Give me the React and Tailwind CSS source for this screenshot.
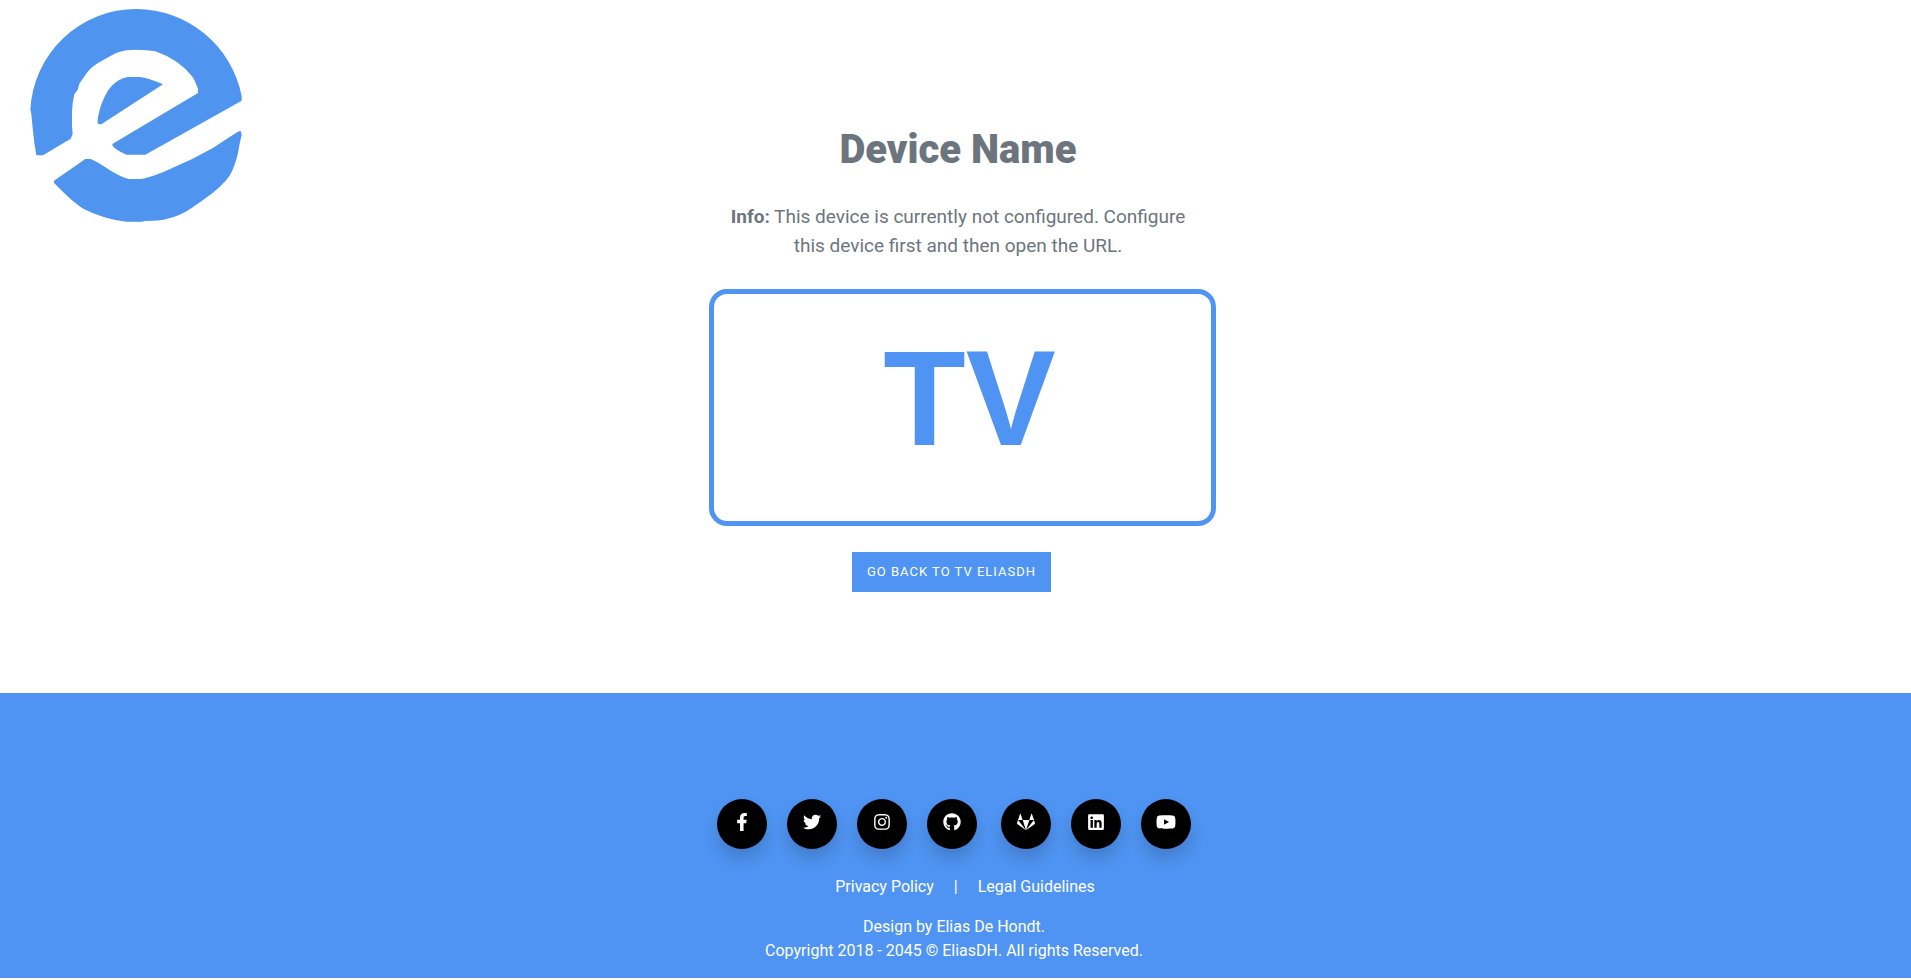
import {
  FaFacebookF,
  FaTwitter,
  FaInstagram,
  FaGithub,
  FaGitlab,
  FaLinkedin,
  FaYoutube,
} from 'react-icons/fa';

const socialGroups = [
  [
    { label: 'Facebook', Icon: FaFacebookF, size: 'size-[18px]' },
    { label: 'Twitter', Icon: FaTwitter, size: 'size-[18px]' },
    { label: 'Instagram', Icon: FaInstagram, size: 'size-[18px]' },
    { label: 'GitHub', Icon: FaGithub, size: 'size-[18px]' },
  ],
  [
    { label: 'GitLab', Icon: FaGitlab, size: 'size-[18px]' },
    { label: 'LinkedIn', Icon: FaLinkedin, size: 'size-[18px]' },
    { label: 'YouTube', Icon: FaYoutube, size: 'size-5' },
  ],
];

function Logo() {
  return (
    <svg viewBox="90 27 636 639" className="h-[213px] w-[212px]" fill="#4f94ee" role="img" aria-label="EliasDH">
      <path d="M109 466L103 428L98 385L94 341L91 330A318 318 0 0 1 410 27A324 324 0 0 1 725 288V302L436 464H380Q355 455 338 439L337 432L594 279V267Q588 248 578 231Q536 178 466 154Q440 149 410 149Q370 149 348 159L311 179Q274 198 258 222L238 251L233 269L223 283Q217 308 216 335V380L218 402L212 416L129 466Z" />
      <path d="M293 371V357Q300 310 325 270Q350 236 383 231H420Q452 236 489 253L304 373Z" />
      <path d="M162 542L256 477H272L295 488L330 511Q362 531 386 537H425Q470 527 515 505L575 478L640 443L690 410L716 394H723L725 405L718 435Q714 472 696 514Q686 540 637 580L606 602L575 624Q540 648 497 658Q480 663 435 663L425 665H379Q310 657 250 626Q228 614 190 577L162 549Z" />
    </svg>
  );
}

export default function App() {
  return (
    <div className="min-h-screen bg-white font-[Roboto,sans-serif]">
      <main className="grid min-h-[693px] grid-cols-[1fr_507px_1fr] pl-[5px] text-[#6c757d]">
        <a href="#home" className="mt-[9px] ml-[25px] self-start justify-self-start">
          <Logo />
        </a>
        <section className="flex flex-col items-center pt-[120px] pb-[100px] text-center">
          <h1 className="text-[40px] leading-[60px] font-black">Device Name</h1>
          <p className="mt-[22px] w-[470px] text-[19px] leading-[29px]">
            <strong className="font-bold">Info:</strong> This device is currently not configured. Configure this device
            first and then open the URL.
          </p>
          <div className="mt-[29px] ml-[9px] flex h-[237px] w-full shrink-0 justify-center rounded-[18px] border-[5px] border-[#4f94f2] pt-[27px] pl-[14px]">
            <span className="font-['Liberation_Sans',sans-serif] text-[135px] leading-[155px] font-bold text-[#4f94f2]">
              TV
            </span>
          </div>
          <a
            href="#tv"
            className="mt-[26px] mr-[13px] flex h-10 items-center bg-[#4f94f2] px-[15px] text-[13px] tracking-[1px] text-white uppercase"
          >
            Go back to TV EliasDH
          </a>
        </section>
      </main>
      <footer className="flex flex-col items-center bg-[#4f94f2] pt-[106px] pr-[3px] pb-[15px] text-base leading-6 text-white">
        <div className="flex gap-6">
          {socialGroups.map((group, i) => (
            <div key={i} className="flex gap-5">
              {group.map(({ label, Icon, size }) => (
                <a
                  key={label}
                  href={'#' + label.toLowerCase()}
                  aria-label={label}
                  className="flex size-[50px] items-center justify-center rounded-full bg-black pb-1 shadow-[0_10px_15px_rgba(0,0,0,0.15)]"
                >
                  <Icon className={size} />
                </a>
              ))}
            </div>
          ))}
        </div>
        <nav className="mt-[26px] ml-[22px] flex gap-5">
          <a href="#privacy">Privacy Policy</a>
          <span>|</span>
          <a href="#legal">Legal Guidelines</a>
        </nav>
        <p className="mt-4 text-center">
          Design by Elias De Hondt.
          <br />
          Copyright 2018 - 2045 © EliasDH. All rights Reserved.
        </p>
      </footer>
    </div>
  );
}
